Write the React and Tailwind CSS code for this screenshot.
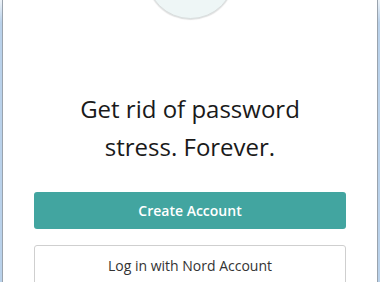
export default function App() {
  return (
    <div className="w-[380px] h-[282px] overflow-hidden flex bg-white" style={{ fontFamily: '"Open Sans", "Noto Sans", sans-serif' }}>
      <div className="w-[2px] h-full bg-gradient-to-b from-[#eef3f8] from-0% to-[#b9d1ea] to-[8%]" />
      <div className="w-px h-full bg-[#9aa3ad]" />
      <div className="flex-1 flex flex-col items-center">
        <div className="w-[89px] h-[89px] shrink-0 rounded-full mt-[-70px] bg-[#eef6f6] border border-[#d9dede] shadow-[0_1px_1px_rgba(0,0,0,0.12)]" />
        <h1 className="mt-[71px] text-[24px] leading-[38px] text-[#1a1a1a] text-center">
          Get rid of password
          <br />
          stress. Forever.
        </h1>
        <button className="mt-[26px] w-[312px] h-[37px] shrink-0 rounded-[3px] bg-[#42a5a0] text-white text-[14px] font-semibold">
          Create Account
        </button>
        <button className="mt-[16px] w-[312px] h-[40px] shrink-0 rounded-[3px] border border-[#cfcfcf] bg-white text-[#333333] text-[14px]">
          Log in with Nord Account
        </button>
      </div>
      <div className="w-px h-full bg-[#9aa3ad]" />
      <div className="w-[2px] h-full bg-gradient-to-b from-[#eef3f8] from-0% to-[#b9d1ea] to-[8%]" />
    </div>
  );
}
